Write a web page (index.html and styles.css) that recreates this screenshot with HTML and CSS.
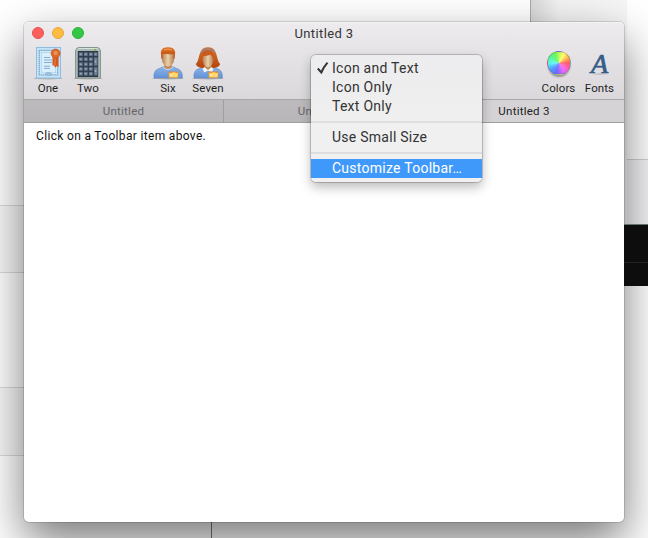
FILE: index.html
```
<!DOCTYPE html>
<html lang="en">
<head>
<meta charset="utf-8">
<title>Untitled 3</title>
<link rel="stylesheet" href="styles.css">
</head>
<body>
<div class="desktop" aria-hidden="true">
  <div class="back-left"></div>
  <div class="band b1"></div><div class="band b2"></div>
  <div class="back-right"></div>
  <div class="back-gray"></div>
  <div class="back-edge"></div>
</div>
<main class="window">
  <header class="chrome">
    <div class="titlebar">
      <div class="lights"><i class="close"></i><i class="minimize"></i><i class="zoom"></i></div>
      <h1>Untitled 3</h1>
    </div>
    <div class="toolbar">
      <div class="item">
        <svg width="32" height="34" viewBox="0 0 32 34">
          <ellipse cx="16" cy="32.4" rx="14.5" ry="1" fill="#777" opacity=".45"/>
          <rect x="4.500" y="1.5" width="24" height="30.5" fill="#c5e4f8" stroke="#8dbce0"/>
          <rect x="7.300" y="4.4" width="18.4" height="24.4" fill="#d0eafa" stroke="#7ba6c9" stroke-width="1.2" stroke-dasharray="1.4 .6"/>
          <rect x="9.300" y="6.4" width="14.4" height="20.4" fill="#d9effb" stroke="#a4cae6" stroke-width=".6"/>
          <path d="M12 11.5h6M12 14h8M12 16.5h8M12 20.2h6M12 22.4h6" stroke="#7ba5cc" stroke-width=".9"/>
          <ellipse cx="16.500" cy="28" rx="3" ry="1.4" fill="#a6c8e2" stroke="#7ba6c9" stroke-width=".7"/>
          <path d="M20.5 9h6v12.500l-1.5-1.7-1.7 2-1.3-2.500-1.5.4z" fill="#d4561f"/>
          <path d="M23 10v9" stroke="#f0853f"/>
          <circle cx="23.6" cy="7.5" r="4.500" fill="#e0692c" stroke="#c1511f" stroke-width=".6"/>
          <circle cx="23.6" cy="7" r="2.5" fill="#f09150" stroke="#cc5e27" stroke-width=".6"/>
        </svg><span>One</span>
      </div>
      <div class="item">
        <svg width="32" height="34" viewBox="0 0 32 34">
          <ellipse cx="16" cy="32.4" rx="14.5" ry="1" fill="#777" opacity=".45"/>
          <path d="M3.5 5Q4 1.5 7 1.5h18q3 0 3.500 3.500v27h-25z" fill="#a9bab4" stroke="#84968f"/>
          <path d="M5 4q1-1.5 3-1.5h16q2 0 3 1.5" fill="none" stroke="#dae4df"/>
          <path d="M21.5 4.300Q22 2.800 23 2.800t1.500 1.500z" fill="#74a91c"/>
          <rect x="5.800" y="5" width="20.400" height="26" fill="#2d3a49"/>
          <g fill="#708197" stroke="#4a5a6e" stroke-width=".5">
            <path d="M7 6.5h3.7v3.4H7zm5 0h3.7v3.4H12zm5 0h3.7v3.4H17zm5 0h3.5v3.4H22z"/>
            <path d="M7 11.5h3.7v3.4H7zm5 0h3.7v3.4H12zm5 0h3.7v3.4H17zm5 0h3.5v8.200H22z"/>
            <path d="M7 16.5h3.7v3.4H7zm5 0h3.7v3.4H12zm5 0h3.7v3.4H17z"/>
            <path d="M7 21.300h3.700v3.400H7zm5 0h3.700v3.400H12zm5 0h3.700v3.400H17zm5 0h3.500v8H22z"/>
            <path d="M7 26.100h3.700v3.400H7zm5 0h3.700v3.400H12zm5 0h3.700v3.400H17z"/>
          </g>
          <path d="M8.200 8.200h1.300m3.700 0h1.300m3.700 0h1.300m3.200 0h1M8.200 13.200h1.300m3.700 0h1.300m3.700 0h1.300M8.200 18.200h1.300m3.700 0h1.300m3.700 0h1.300M8.200 22.900h1.300m3.700 0h1.300m3.700 0h1.300M8.200 27.700h1.300m3.700 0h1.300m3.700 0h1.300M23.700 14.500v2m0 7.500v2" stroke="#c6d0dc" stroke-width=".8"/>
        </svg><span>Two</span>
      </div>
      <div class="spacer"></div>
      <div class="item">
        <svg width="32" height="34" viewBox="0 0 32 34">
          <defs>
            <linearGradient id="shirt" x2="0" y2="1"><stop stop-color="#8db4e8"/><stop offset="1" stop-color="#6292da"/></linearGradient>
            <linearGradient id="skin"><stop stop-color="#b58254"/><stop offset=".5" stop-color="#ecd0aa"/><stop offset="1" stop-color="#b07c4e"/></linearGradient>
            <linearGradient id="hair" x2="0" y2="1"><stop stop-color="#de7326"/><stop offset="1" stop-color="#b4440f"/></linearGradient>
          </defs>
          <ellipse cx="16" cy="32.400" rx="15.500" ry="1" fill="#777" opacity=".45"/>
          <path d="M2 32Q1.200 24.500 6.500 22.800L12 20.500h8l5.500 2.300q5.500 1.700 4.800 9.200z" fill="url(#shirt)" stroke="#6288c2" stroke-width=".6"/>
          <path d="M12.300 16h7.400v5.200q-1 2.300-3.700 2.300t-3.700-2.300z" fill="#c28b5a"/>
          <path d="M11 21.200q5 4.700 10 0" fill="none" stroke="#c8def5"/>
          <ellipse cx="16" cy="12.500" rx="6.200" ry="8" fill="url(#skin)"/>
          <path d="M9.500 13L8.800 6.500Q9.300 1.200 16 1.200t7.200 5.300l-.7 6.500-1.100-1V8.500q-5-1-10.700-.3V12z" fill="url(#hair)"/>
          <path d="M12 4q4-2 8 0" fill="none" stroke="#f5a055"/>
          <rect x="17" y="26" width="9" height="5.500" fill="#ffd568" stroke="#ef9c30" stroke-width=".7"/>
          <path d="M17.200 26.200h3M23.500 26.200h2.200" stroke="#e66e25"/><path d="M18 29h3m2.500-.2h1.300" stroke="#fff6cd"/>
        </svg><span>Six</span>
      </div>
      <div class="item">
        <svg width="32" height="34" viewBox="0 0 32 34">
          <ellipse cx="16" cy="32.400" rx="15.500" ry="1" fill="#777" opacity=".45"/>
          <path d="M2 32Q1.200 24.500 6.500 22.800L12 20.500h8l5.500 2.300q5.500 1.700 4.800 9.200z" fill="url(#shirt)" stroke="#6288c2" stroke-width=".6"/>
          <path d="M8.300 6.500Q10 1.200 16 1.200t7.700 5.300c1.900 4.500 1.800 9 4.500 11.500q-1 3.500-6.700 4h-11q-5.700-.5-6.700-4C6.500 15.500 6.400 11 8.300 6.500z" fill="url(#hair)"/>
          <path d="M12.500 17h7v5L16 25.500 12.500 22z" fill="#c28b5a"/>
          <path d="M12.200 21l-1.700 2 1.900 3.400 3.600-1.800 3.600 1.800 1.900-3.400-1.700-2-3.800 3z" fill="#f1f6fa"/>
          <ellipse cx="16" cy="13.500" rx="5.400" ry="7.500" fill="url(#skin)"/>
          <path d="M9.600 14Q9 6.800 13 4.300h5q4.700 2.500 4.400 9.200l-1.400-.5q-.2-2.500-2.500-4.300Q14.500 10 11 10.300z" fill="#ca5b1e"/>
          <path d="M9.300 6.500Q12 3 16 3t6.700 3.500" fill="none" stroke="#6e92bd" stroke-width="1.200"/>
          <rect x="17" y="26" width="9" height="5.500" fill="#ffd568" stroke="#ef9c30" stroke-width=".7"/>
          <path d="M17.200 26.200h3M23.500 26.200h2.200" stroke="#e66e25"/><path d="M18 29h3m2.500-.2h1.300" stroke="#fff6cd"/>
        </svg><span>Seven</span>
      </div>
      <div class="flex-space"></div>
      <div class="item wide"><div class="wheel-box"><div class="wheel"></div></div><span>Colors</span></div>
      <div class="item wide"><div class="font-glyph" aria-hidden="true">A</div><span>Fonts</span></div>
    </div>
    <nav class="tabs"><div class="tab">Untitled</div><div class="tab">Untitled 2</div><div class="tab active">Untitled 3</div></nav>
  </header>
  <p class="message">Click on a Toolbar item above.</p>
</main>
<div class="back-dark" aria-hidden="true"></div>
<div class="menu" role="menu">
  <div class="choice"><svg class="check" width="14" height="14" viewBox="0 0 14 14"><path d="M1.800 7.500l3.500 4Q7.600 6.100 11.500 1.700" fill="none" stroke="#333" stroke-width="2"/></svg><span>Icon and Text</span></div>
  <div class="choice">Icon Only</div>
  <div class="choice">Text Only</div>
  <div class="separator"></div>
  <div class="choice">Use Small Size</div>
  <div class="separator"></div>
  <div class="choice selected">Customize Toolbar…</div>
</div>
</body>
</html>
```
FILE: styles.css
```
* { box-sizing: border-box; }
body { margin: 0; width: 648px; height: 538px; overflow: hidden; position: relative; background: #fff; font-family: Roboto, "Liberation Sans", sans-serif; color: #1f1f1f; }
.desktop, .desktop div { position: absolute; }
.desktop { inset: 0; overflow: hidden; }
.desktop .back-left { inset: 0 118px 0 0; background: #fff; }
.band { left: 0; width: 30px; background: #f8f8f8; border: solid #dadada; border-width: 1px 0; }
.b1 { top: 205px; height: 68px; } .b2 { top: 387px; height: 69px; }
.back-right { left: 530px; top: 0; width: 97px; height: 286px; background: linear-gradient(90deg, #d8d8d8, #f2f2f2 28px, #f6f6f6); border-left: 1px solid #aaa; }
.back-gray { left: 627px; top: 159px; width: 21px; height: 65px; background: #f3f3f6; border-top: 1px solid #d0d0d0; }
.back-dark { position: absolute; left: 624px; top: 224px; width: 24px; height: 62px; background: linear-gradient(#0d0d0d 37px, #222 37px 38px, #0d0d0d 38px); border-top: 1px solid #65706c; }
.back-edge { left: 211px; top: 510px; width: 1px; height: 28px; background: #777; }
.window { position: absolute; left: 24px; top: 22px; width: 600px; height: 500px; background: #fff; border-radius: 5px; box-shadow: 0 0 0 1px rgba(0,0,0,.13), 0 19px 46px rgba(0,0,0,.53); }
.chrome { height: 101px; border-radius: 5px 5px 0 0; overflow: hidden; background: linear-gradient(#edebee, #dad8db 77px); box-shadow: inset 0 1px #f5f4f5; }
.titlebar { height: 23px; display: grid; grid-template-columns: 100px 400px 100px; }
.lights { display: flex; gap: 8px; padding: 5px 0 0 8px; }
.lights i { width: 12px; height: 12px; border-radius: 50%; border: 1px solid #e94f4c; background: #fc605c; }
.lights .minimize { background: #fdbc40; border-color: #e5a83c; }
.lights .zoom { background: #33c748; border-color: #2bb03a; }
h1 { margin: 0; text-align: center; font-size: 13px; line-height: 23px; font-weight: 400; color: #353535; letter-spacing: .38px; }
.toolbar { height: 54px; display: flex; padding: 1px 4px 0; }
.item { width: 40px; display: flex; flex-direction: column; align-items: center; font-size: 11.5px; line-height: 14px; letter-spacing: .1px; }
.item svg { display: block; flex: none; }
.item span { margin-top: 1px; }
.wide { width: 41px; }
.spacer { width: 40px; }
.flex-space { flex: 1; }
.wheel-box { height: 34px; padding-top: 5px; }
.wheel { width: 24px; height: 24px; border-radius: 50%; border: 1px solid rgba(100,100,100,.4); background: radial-gradient(circle, rgba(255,255,255,.2), transparent 60%), conic-gradient(#b8fa5c, #ffff66 30deg, #ffb24f 60deg, #ff5964 90deg, #ff62c0 120deg, #e866ff 150deg, #6d65ff 195deg, #4f9dff 230deg, #5cf7f4 270deg, #5bf58a 310deg, #70f755 340deg, #b8fa5c); box-shadow: 0 3px 2px -1px rgba(0,0,0,.35); }
.font-glyph { height: 34px; width: 24px; text-align: center; font: italic 28px/36px "Liberation Serif", serif; color: #365d88; -webkit-text-stroke: .7px #365d88; background: radial-gradient(ellipse at 50% 50%, #7778, transparent 11px) no-repeat 0 27px / 24px 2px; letter-spacing: 0; }
.tabs { height: 24px; display: flex; border-top: 1px solid #a9a8a9; border-bottom: 1px solid #a09fa0; }
.tab { width: 200px; text-align: center; font-size: 11.5px; line-height: 23px; letter-spacing: .25px; color: #666467; background: linear-gradient(#bcbabd, #b8b6b9); border-right: 1px solid #a09ea1; }
.tab.active { background: #d5d3d6; color: #222; border: 0; }
.message { margin: 5px 12px; font-size: 12px; line-height: 16px; letter-spacing: .33px; color: #111; }
.menu { position: absolute; left: 311px; top: 55px; width: 171px; height: 127px; padding-top: 4px; border-radius: 5px; background: linear-gradient(#edecee, #f0f0f0 60%); box-shadow: 0 0 0 1px rgba(0,0,0,.19), 0 5px 12px rgba(0,0,0,.28); font-size: 14px; letter-spacing: .26px; color: #333; }
.choice { height: 19px; line-height: 19px; padding-left: 21px; white-space: nowrap; position: relative; }
.check { position: absolute; left: 5px; top: 2px; }
.separator { height: 12px; padding-top: 5px; }
.separator::before { content: ""; display: block; height: 2px; background: #dedddf; }
.selected { background: #3f99fb; color: #fff; }
```
